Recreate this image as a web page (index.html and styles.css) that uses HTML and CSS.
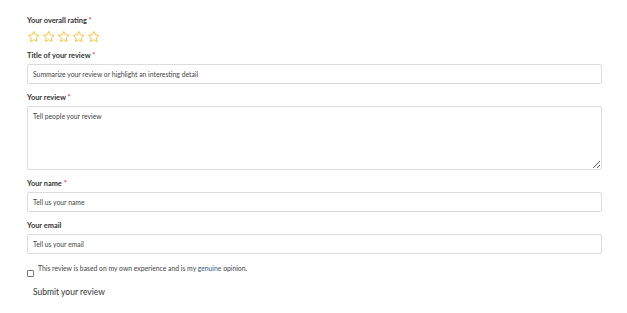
FILE: index.html
```html
<!DOCTYPE html>
<html lang="en">
<head>
    <meta charset="UTF-8">
    <meta name="viewport" content="width=device-width, initial-scale=1.0">
    <title>Write a review</title>
    <link rel="stylesheet" href="styles.css">
</head>
<body>
    <form class="review-form" novalidate>
        <div class="form-group">
            <label>Your overall rating <span class="req">*</span></label>
            <div class="stars">
                <svg class="star" viewBox="0 0 24 24"><path d="M12 2.5l2.9 6.1 6.6.8-4.9 4.6 1.3 6.6L12 17.3l-5.9 3.3 1.3-6.6-4.9-4.6 6.6-.8z"/></svg>
                <svg class="star" viewBox="0 0 24 24"><path d="M12 2.5l2.9 6.1 6.6.8-4.9 4.6 1.3 6.6L12 17.3l-5.9 3.3 1.3-6.6-4.9-4.6 6.6-.8z"/></svg>
                <svg class="star" viewBox="0 0 24 24"><path d="M12 2.5l2.9 6.1 6.6.8-4.9 4.6 1.3 6.6L12 17.3l-5.9 3.3 1.3-6.6-4.9-4.6 6.6-.8z"/></svg>
                <svg class="star" viewBox="0 0 24 24"><path d="M12 2.5l2.9 6.1 6.6.8-4.9 4.6 1.3 6.6L12 17.3l-5.9 3.3 1.3-6.6-4.9-4.6 6.6-.8z"/></svg>
                <svg class="star" viewBox="0 0 24 24"><path d="M12 2.5l2.9 6.1 6.6.8-4.9 4.6 1.3 6.6L12 17.3l-5.9 3.3 1.3-6.6-4.9-4.6 6.6-.8z"/></svg>
            </div>
        </div>

        <div class="form-group">
            <label for="title">Title of your review <span class="req">*</span></label>
            <input type="text" id="title" placeholder="Summarize your review or highlight an interesting detail">
        </div>

        <div class="form-group">
            <label for="review">Your review <span class="req">*</span></label>
            <textarea id="review" placeholder="Tell people your review"></textarea>
        </div>

        <div class="form-group">
            <label for="name">Your name <span class="req">*</span></label>
            <input type="text" id="name" placeholder="Tell us your name">
        </div>

        <div class="form-group">
            <label for="email">Your email</label>
            <input type="email" id="email" placeholder="Tell us your email">
        </div>

        <div class="form-check">
            <input type="checkbox" id="terms">
            <span>This review is based on my own experience and is my <span class="hl">genuine</span> opinion.</span>
        </div>

        <button type="submit">Submit your review</button>
    </form>
</body>
</html>
```

FILE: styles.css
```css
body {
    font-family: Lato, "Open Sans", sans-serif;
    background-color: #fff;
    color: #333;
    margin: 0;
    padding: 16px 25px 0 27px;
}

.review-form {
    width: 575px;
}

.form-group {
    margin-bottom: 9px;
}

.form-group:first-child {
    margin-bottom: 8px;
}

label {
    display: block;
    font-size: 7.4px;
    line-height: 10px;
    font-weight: bold;
    color: #333;
    margin-bottom: 3px;
}

.req {
    color: #e0413a;
}

.stars {
    display: flex;
    gap: 1.5px;
    padding-top: 1px;
    margin-bottom: -1px;
}

.star {
    width: 13.5px;
    height: 13.5px;
    fill: none;
    stroke: #f3be2d;
    stroke-width: 1.6;
    stroke-linejoin: round;
}

input[type="text"], input[type="email"], textarea {
    display: block;
    width: 100%;
    box-sizing: border-box;
    height: 20px;
    padding: 0 5px;
    font-family: inherit;
    font-size: 6.8px;
    color: #333;
    border: 1px solid #dcdcdc;
    border-radius: 2px;
    outline: none;
}

textarea {
    height: 64px;
    padding: 5px 5px;
    line-height: 9px;
    resize: vertical;
}

::placeholder {
    color: #444;
    opacity: 1;
}

.form-check {
    display: flex;
    align-items: flex-start;
    gap: 4px;
    margin-top: 10px;
    font-size: 6.8px;
    line-height: 9px;
    color: #444;
}

.form-check input {
    appearance: none;
    flex-shrink: 0;
    margin: 6px 0 0 0;
    width: 7px;
    height: 7px;
    border: 1px solid #777;
    border-radius: 1px;
    background: #fff;
}

.hl {
    color: #3b5a8a;
}

button {
    display: block;
    margin-top: 9px;
    padding: 0 6px;
    font-family: inherit;
    font-size: 8.5px;
    line-height: 12px;
    color: #333;
    background: none;
    border: none;
    cursor: pointer;
}
```
